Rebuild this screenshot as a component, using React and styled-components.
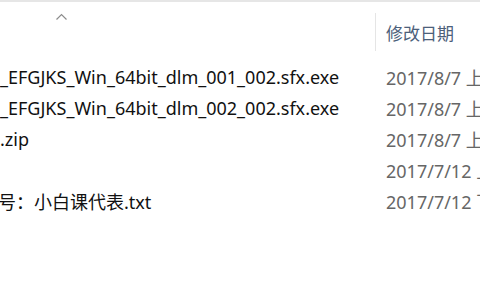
import React from 'react'
import styled, { createGlobalStyle } from 'styled-components'

const GlobalStyle = createGlobalStyle`
    html, body {
        margin: 0;
        padding: 0;
        background: #ffffff;
    }
    body {
        font-family: "Noto Sans", "Noto Sans CJK SC", sans-serif;
    }
`;

const Window = styled.div`
    width: 480px;
    height: 300px;
    overflow: hidden;
    background: #ffffff;
    border-top: 2px solid #e6e6e6;
    box-sizing: border-box;
`;

const Header = styled.div`
    display: grid;
    grid-template-columns: 375px 1fr;
    height: 59px;
`;

const NameHeader = styled.div`
    display: flex;
    justify-content: flex-start;
    padding: 11px 0 0 56px;
`;

const DateHeader = styled.div`
    display: flex;
    align-items: center;
    border-left: 1px solid #e5e5e5;
    margin: 11px 0 10px;
    padding-left: 10px;
    color: #4c607a;
    font-size: 17px;
    font-family: "Noto Sans CJK SC", sans-serif;
`;

const Rows = styled.div`
    display: flex;
    flex-direction: column;
`;

const Row = styled.div`
    display: grid;
    grid-template-columns: 375px 1fr;
    height: 31px;
    align-items: center;
    font-size: 18px;
    white-space: nowrap;
`;

const Name = styled.div`
    overflow: hidden;
    color: #111111;
    margin-left: ${p => p.shift || 0}px;
`;

const Date = styled.div`
    padding-left: 11px;
    color: #666666;
    overflow: hidden;
`;

const files = [
    { name: '_EFGJKS_Win_64bit_dlm_001_002.sfx.exe', date: '2017/8/7 上午 10:21' },
    { name: '_EFGJKS_Win_64bit_dlm_002_002.sfx.exe', date: '2017/8/7 上午 10:22' },
    { name: '.zip', date: '2017/8/7 上午 10:30' },
    { name: '', date: '2017/7/12 上午 9:15' },
    { name: '号：小白课代表.txt', date: '2017/7/12 下午 3:40', shift: -2 },
];

function Caret() {
    return (
        <svg width="11" height="7" viewBox="0 0 11 7">
            <path d="M0.5 6.5 L5.5 1.5 L10.5 6.5" fill="none" stroke="#8c8c8c" strokeWidth="1.2" />
        </svg>
    )
}

export default function App() {
    return (
        <>
            <GlobalStyle />
            <Window>
                <Header>
                    <NameHeader><Caret /></NameHeader>
                    <DateHeader>修改日期</DateHeader>
                </Header>
                <Rows>
                    {files.map((f, i) => (
                        <Row key={i}>
                            <Name shift={f.shift}>{f.name}</Name>
                            <Date>{f.date}</Date>
                        </Row>
                    ))}
                </Rows>
            </Window>
        </>
    )
}
